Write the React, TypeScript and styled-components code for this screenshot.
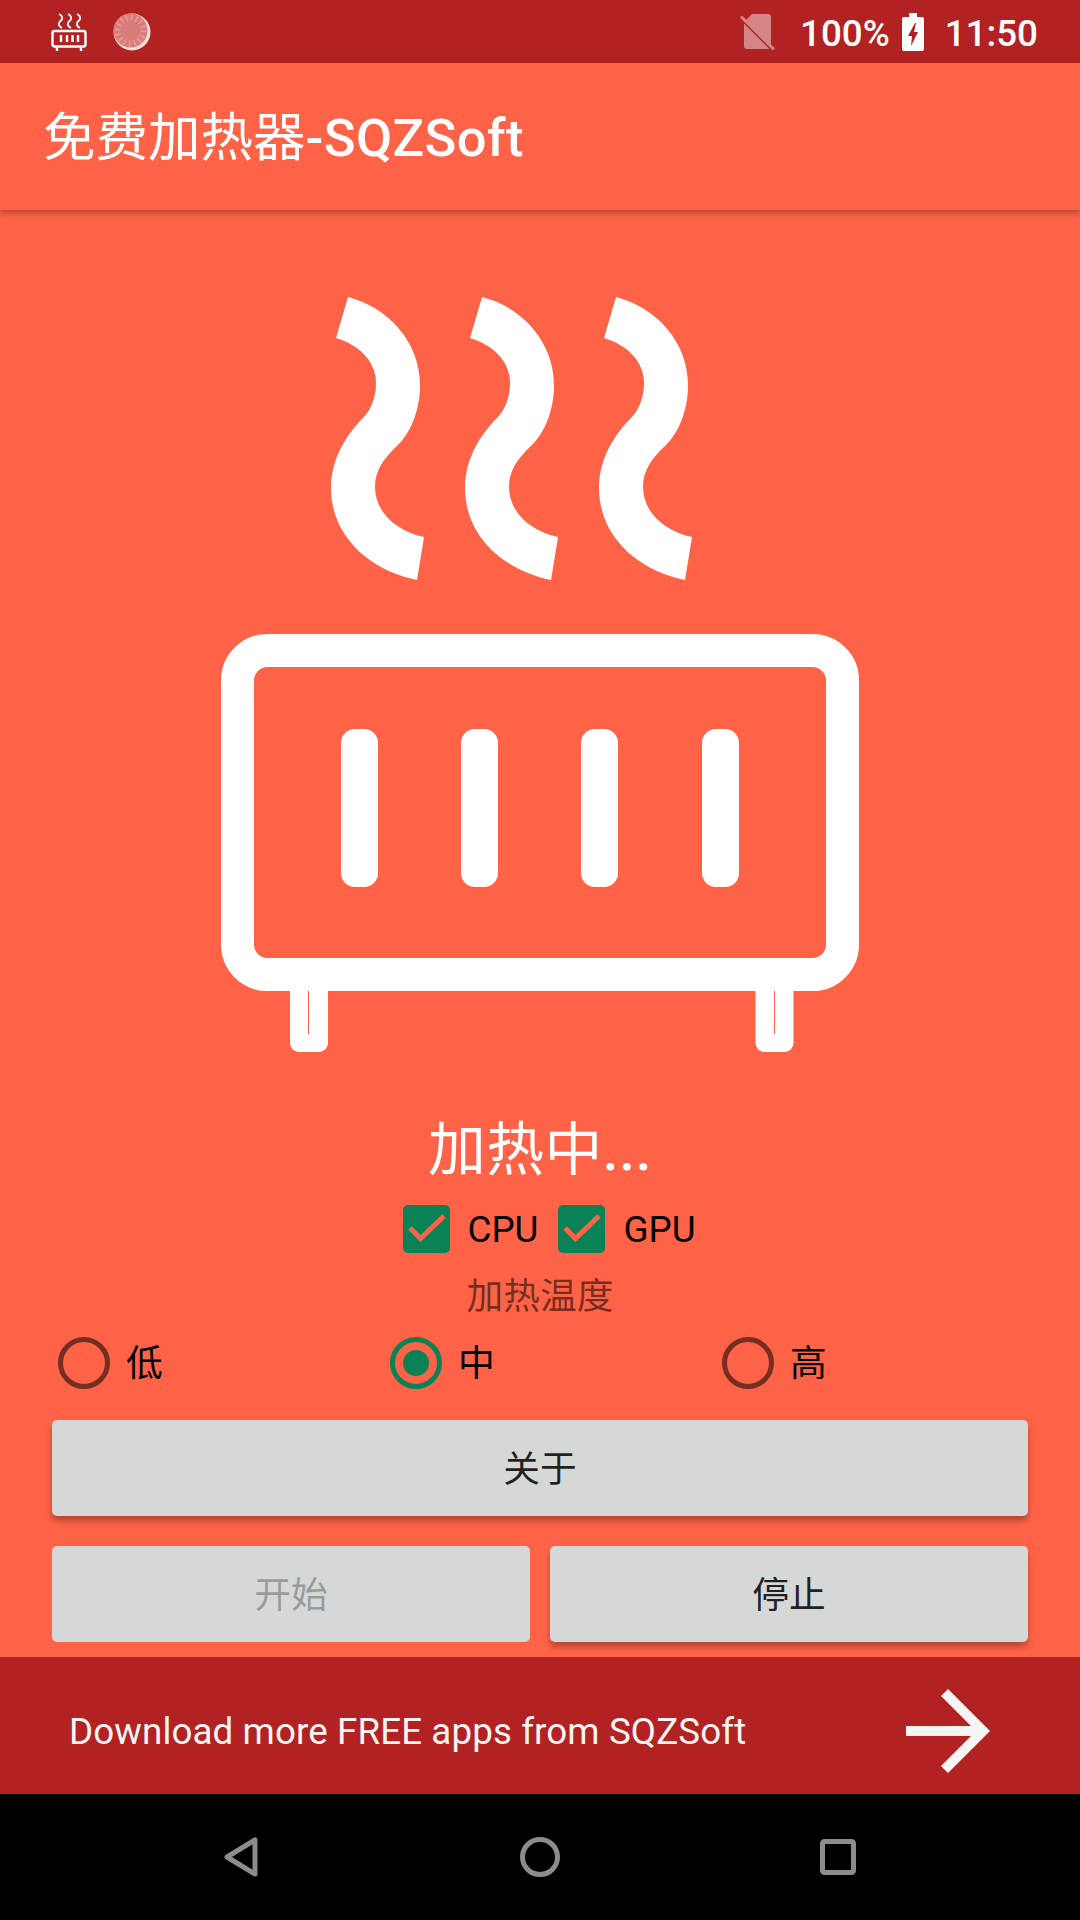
import styled, { createGlobalStyle } from "styled-components";

const FONT = `Roboto, "Noto Sans CJK SC", sans-serif`;
const TOMATO = "#ff6347";
const FIREBRICK = "#b22222";
const GREEN = "#0a8255";

const GlobalStyle = createGlobalStyle`
    html, body {
        margin: 0;
        padding: 0;
        background: ${TOMATO};
    }
    * {
        box-sizing: border-box;
    }
`;

const WAVE =
    "M348,297 C388,307 420,342 420,385 C420,410 411,432 398,445 C384,458 375,470 375,487 C375,512 396,531 424,537 L417,580 C372,571 331,538 331,488 C331,461 344,437 363,418 C371,410 376,397 376,383 C376,361 359,345 336,338 Z";

const BAR_XS = [341, 461, 581, 702];

const HeaterArt = () => (
    <HeaterSvg viewBox="221 296 638 756" width="638" height="756">
        <g fill="#fff">
            <path d={WAVE} />
            <path d={WAVE} transform="translate(134 0)" />
            <path d={WAVE} transform="translate(268 0)" />
            <rect x="290" y="980" width="38" height="72" rx="9" />
            <rect x="755.5" y="980" width="38" height="72" rx="9" />
        </g>
        <rect x="237.5" y="650.5" width="605" height="324" rx="30" fill={TOMATO} stroke="#fff" strokeWidth="33" />
        <g fill="#fff">
            {BAR_XS.map((x) => (
                <rect key={x} x={x} y="729" width="37" height="158" rx="14" />
            ))}
        </g>
        <rect x="308" y="991" width="1" height="43" fill={TOMATO} />
        <rect x="774" y="991" width="1" height="43" fill={TOMATO} />
    </HeaterSvg>
);

const SmallHeater = () => (
    <svg width="36" height="38" viewBox="0 0 36 38" fill="none" stroke="#fff">
        <g strokeWidth="1.8">
            <path d="M8 1 C12 3 12 6 9.5 8 C7 10 7 13 11 15" />
            <path d="M17 1 C21 3 21 6 18.5 8 C16 10 16 13 20 15" />
            <path d="M26 1 C30 3 30 6 27.5 8 C25 10 25 13 29 15" />
        </g>
        <rect x="1.5" y="18" width="33" height="15.5" rx="2" strokeWidth="2.4" />
        <g strokeWidth="2.4">
            <path d="M10 22 V29 M16 22 V29 M21.5 22 V29 M27 22 V29" />
            <path d="M6 34 V38 M30 34 V38" />
        </g>
    </svg>
);

const Dial = () => (
    <svg width="38" height="38" viewBox="0 0 38 38">
        <circle cx="19" cy="19" r="18.5" fill="#f6dedb" />
        <circle cx="17.5" cy="17.5" r="17" fill="#d97c7a" />
        <circle
            cx="17.5"
            cy="17.5"
            r="13"
            fill="none"
            stroke="#e39d99"
            strokeWidth="6"
            strokeDasharray="1.6 3.5"
        />
    </svg>
);

const SimOff = () => (
    <svg width="36" height="38" viewBox="0 0 36 38">
        <g opacity="0.45">
            <path fill="#fff" d="M12 1 H28 A3 3 0 0 1 31 4 V33 A3 3 0 0 1 28 36 H7 A3 3 0 0 1 4 33 V9 Z" />
            <path stroke={FIREBRICK} strokeWidth="2" fill="none" d="M2 7 L31 36" />
            <path stroke="#fff" strokeWidth="3" fill="none" strokeLinecap="round" d="M2 4.5 L33 35.5" />
        </g>
    </svg>
);

const Battery = () => (
    <svg width="22" height="38" viewBox="0 0 22 38">
        <path
            fill="#fff"
            fillRule="evenodd"
            d="M7 0 H15 V4 H20 A2 2 0 0 1 22 6 V36 A2 2 0 0 1 20 38 H2 A2 2 0 0 1 0 36 V6 A2 2 0 0 1 2 4 H7 Z M13 10 L6 23 H10 L9 33 L16 19 H12 L14 10 Z"
        />
    </svg>
);

const CheckMark = () => (
    <svg width="47" height="48" viewBox="0 0 47 48" fill="none">
        <path d="M7 23 L17.5 33.5 L41 11" stroke={TOMATO} strokeWidth="5" />
    </svg>
);

const ForwardArrow = () => (
    <svg width="84" height="84" viewBox="0 0 84 84" fill="#f5f5f5">
        <path d="M0 37 H65 L35 7 L42 0 L84 42 L42 84 L35 77 L65 47 H0 Z" />
    </svg>
);

const BackKey = () => (
    <svg width="36" height="42" viewBox="0 0 36 42" fill="none">
        <path d="M31 4 V38 L3 21 Z" stroke="#8c8c8c" strokeWidth="5" strokeLinejoin="round" />
    </svg>
);

const HomeKey = () => (
    <svg width="40" height="40" viewBox="0 0 40 40" fill="none">
        <circle cx="20" cy="20" r="17.5" stroke="#8c8c8c" strokeWidth="5" />
    </svg>
);

const RecentKey = () => (
    <svg width="36" height="36" viewBox="0 0 36 36" fill="none">
        <rect x="2.5" y="2.5" width="31" height="31" rx="2" stroke="#8c8c8c" strokeWidth="5" />
    </svg>
);

const App = () => {
    return (
        <Screen>
            <GlobalStyle />
            <StatusBar>
                <StatusLeft>
                    <SmallHeater />
                    <Dial />
                </StatusLeft>
                <StatusRight>
                    <SimOff />
                    <BatteryLevel>100%</BatteryLevel>
                    <Battery />
                    <Clock>11:50</Clock>
                </StatusRight>
            </StatusBar>
            <AppBar>
                <AppTitle>
                    <AppName>免费加热器</AppName>-SQZSoft
                </AppTitle>
            </AppBar>
            <Main>
                <HeaterArt />
                <StatusTitle>
                    加热中<Dots>...</Dots>
                </StatusTitle>
                <CheckRow>
                    <CheckBox><CheckMark /></CheckBox>
                    <OptionText>CPU</OptionText>
                    <CheckBox><CheckMark /></CheckBox>
                    <OptionText>GPU</OptionText>
                </CheckRow>
                <Caption>加热温度</Caption>
                <RadioRow>
                    {["低", "中", "高"].map((label) => (
                        <RadioItem key={label}>
                            <RadioCircle $checked={label === "中"} />
                            <OptionText>{label}</OptionText>
                        </RadioItem>
                    ))}
                </RadioRow>
                <ButtonStack>
                    <ActionButton>关于</ActionButton>
                    <ButtonRow>
                        <ActionButton disabled>开始</ActionButton>
                        <ActionButton>停止</ActionButton>
                    </ButtonRow>
                </ButtonStack>
            </Main>
            <Banner>
                <BannerText>Download more FREE apps from SQZSoft</BannerText>
                <ForwardArrow />
            </Banner>
            <NavBar>
                <BackKey />
                <HomeKey />
                <RecentKey />
            </NavBar>
        </Screen>
    );
};

const Screen = styled.div`
    display: flex;
    flex-direction: column;
    width: 1080px;
    height: 1920px;
    overflow: hidden;
    background: ${TOMATO};
    font-family: ${FONT};
`;

const StatusBar = styled.div`
    display: flex;
    justify-content: space-between;
    align-items: center;
    height: 63px;
    padding: 0 42px 0 51px;
    background: ${FIREBRICK};
`;

const StatusLeft = styled.div`
    display: flex;
    align-items: center;
    gap: 26px;
`;

const StatusRight = styled.div`
    display: flex;
    align-items: center;
`;

const BatteryLevel = styled.span`
    margin: 0 12px 0 24px;
    padding-top: 4px;
    font-size: 36.75px;
    font-weight: 500;
    color: #fff;
`;

const Clock = styled(BatteryLevel)`
    margin: 0 0 0 21px;
`;

const AppBar = styled.div`
    position: relative;
    z-index: 1;
    display: flex;
    align-items: center;
    height: 147px;
    padding: 0 0 8px 43px;
    background: ${TOMATO};
    box-shadow: 0 3px 6px rgba(0, 0, 0, 0.3);
`;

const AppTitle = styled.div`
    font-size: 52.5px;
    font-weight: 500;
    letter-spacing: 0.4px;
    color: #fff;
`;

const AppName = styled.span`
    font-weight: 400;
    letter-spacing: 0;
`;

const Main = styled.div`
    flex: 1;
    display: flex;
    flex-direction: column;
    align-items: center;
    padding-top: 86px;
`;

const HeaterSvg = styled.svg`
    display: block;
    flex: none;
`;

const StatusTitle = styled.div`
    margin-top: 60px;
    height: 76px;
    line-height: 76px;
    font-size: 57.75px;
    letter-spacing: 0.4px;
    color: #fff;
`;

const Dots = styled.span`
    font-weight: 500;
`;

const CheckRow = styled.div`
    display: flex;
    align-items: center;
    height: 48px;
    margin: 17px 0 0 18px;
`;

const CheckBox = styled.div`
    width: 47px;
    height: 48px;
    margin-right: 18px;
    border-radius: 5px;
    background: ${GREEN};

    svg {
        display: block;
    }

    &:nth-child(3) {
        margin-left: 20px;
    }
`;

const OptionText = styled.span`
    padding-top: 2px;
    font-size: 36.75px;
    line-height: 48px;
    color: #000;
`;

const Caption = styled.div`
    margin-top: 19px;
    line-height: 50px;
    font-size: 36.75px;
    color: rgba(0, 0, 0, 0.54);
`;

const RadioRow = styled.div`
    display: grid;
    grid-template-columns: repeat(3, 332px);
    align-self: stretch;
    margin-top: 15px;
    padding-left: 58px;
`;

const RadioItem = styled.div`
    display: flex;
    align-items: center;
    gap: 16px;
`;

const RadioCircle = styled.div<{ $checked: boolean }>`
    position: relative;
    width: 52px;
    height: 52px;
    border-radius: 50%;
    border: 5px solid ${(p) => (p.$checked ? GREEN : "#752e21")};

    &::after {
        content: "";
        display: ${(p) => (p.$checked ? "block" : "none")};
        position: absolute;
        inset: 8px;
        border-radius: 50%;
        background: ${GREEN};
    }
`;

const ButtonStack = styled.div`
    display: flex;
    flex-direction: column;
    gap: 30px;
    align-self: stretch;
    margin-top: 31px;
    padding: 0 52px;
`;

const ButtonRow = styled.div`
    display: grid;
    grid-template-columns: 1fr 1fr;
    gap: 20px;
`;

const ActionButton = styled.button`
    height: 96px;
    padding: 0 0 4px;
    border: none;
    border-radius: 5px;
    background: #d6d7d7;
    box-shadow: 0 5px 6px rgba(0, 0, 0, 0.28);
    font-family: ${FONT};
    font-size: 36.75px;
    color: rgba(0, 0, 0, 0.87);

    &:disabled {
        box-shadow: none;
        color: rgba(0, 0, 0, 0.3);
    }
`;

const Banner = styled.div`
    display: flex;
    justify-content: space-between;
    align-items: center;
    height: 137px;
    padding: 11px 90px 0 69px;
    background: ${FIREBRICK};

    svg {
        flex: none;
    }
`;

const BannerText = styled.span`
    font-size: 36.75px;
    letter-spacing: 0.1px;
    color: #f5f5f5;
`;

const NavBar = styled.div`
    display: grid;
    grid-template-columns: 36px 40px 36px;
    justify-content: center;
    column-gap: 260px;
    align-items: center;
    height: 126px;
    background: #000;

    svg {
        display: block;
    }
`;

export default App;
